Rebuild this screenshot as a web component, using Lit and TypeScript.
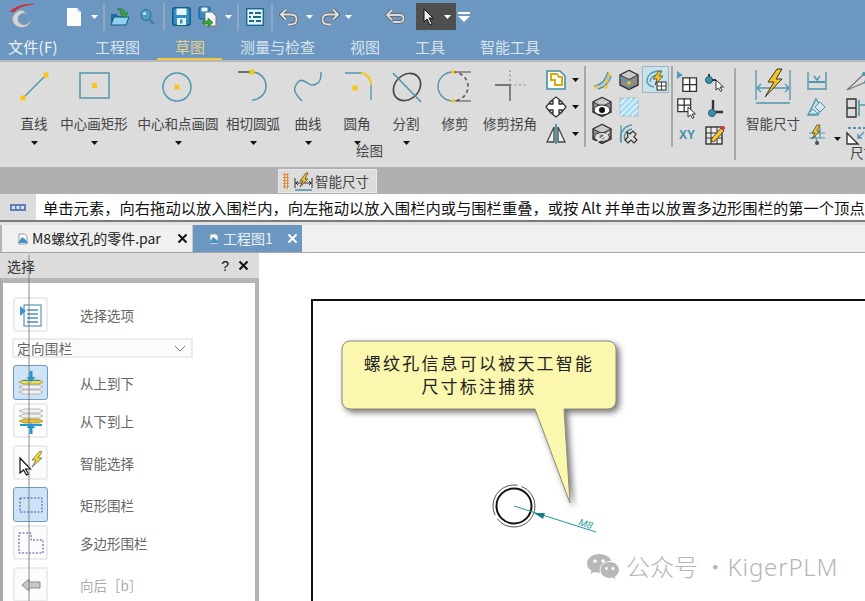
import {customElement} from "lit/decorators.js";
import {css, html, LitElement, svg, SVGTemplateResult, TemplateResult} from "lit";

const BLUE = "#4f97ad";
const YEL = "#f7c51d";
const DK = "#4a4a4a";

const caretW = html`<svg width="7" height="4" viewBox="0 0 7 4"><path d="M0 0h7L3.500 4z" fill="#fff"/></svg>`;
const caretK = html`<svg width="7" height="4" viewBox="0 0 7 4"><path d="M0 0h7L3.500 4z" fill="#111"/></svg>`;
const qsep = html`<i class="qsep"></i>`;
const cross = html`<svg width="11" height="11" viewBox="0 0 11 11"><path d="M1.500 1.500l8 8M9.500 1.500l-8 8" fill="none" stroke="currentColor" stroke-width="2"/></svg>`;

const logo = html`<svg width="30" height="27" viewBox="0 0 30 27">
  <path d="M3 9C8 3 18 0 29 1 20 2 12 4 7 9z" fill="#c8302c"/>
  <path d="M14 7C7 9 4 14 6 19c2 5 9 7 14 4 3-2 4-4 4-6-2 3-6 6-10 4-4-2-4-8 0-10 2-1 4-1 6 0-2-2-4-4-6-4z" fill="#d5d5d5" stroke="#8d9aa6" stroke-width=".8"/>
</svg>`;
const newDoc = html`<svg width="16" height="18" viewBox="0 0 16 18"><path d="M1 0h10l4 4v14H1z" fill="#fbfbfb"/><path d="M11 0v4h4z" fill="#cfd5da"/></svg>`;
const openDir = html`<svg width="20" height="20" viewBox="0 0 20 20">
  <path d="M1 7h6l1 2h8v9H1z" fill="#1f6f9c"/><path d="M1 18l3-8h15l-3 8z" fill="#8fd0ef" stroke="#12577d"/>
  <path d="M7 2c4-1 7 0 8 4h3l-4 5-4-5h2c-1-2-3-3-5-4z" fill="#3aa43a" stroke="#1d6a1d" stroke-width=".6"/>
</svg>`;
const searchI = html`<svg width="16" height="18" viewBox="0 0 16 18"><ellipse cx="7" cy="7" rx="5" ry="5.500" fill="#4f9ec4" stroke="#2a6f90"/><circle cx="5.500" cy="5.500" r="1.600" fill="#bfe4f4"/><path d="M10 11l5 5" stroke="#4a7f9c" stroke-width="2.500"/></svg>`;
const saveI = html`<svg width="19" height="19" viewBox="0 0 19 19"><rect x=".8" y=".8" width="17.400" height="17.400" rx="2" fill="#2f8fc4" stroke="#135c86" stroke-width="1.500"/><rect x="4.500" y="1.500" width="10" height="6.500" fill="#eaf5fb"/><rect x="5" y="11" width="9" height="7" fill="#e7f2f8"/><rect x="8" y="12.500" width="2.500" height="4" fill="#2f8fc4"/></svg>`;
const saveAll = html`<svg width="20" height="21" viewBox="0 0 20 21"><rect x="1" y="1" width="11" height="12" rx="1" fill="#2f8fc4" stroke="#135c86"/><rect x="3.500" y="1.500" width="6" height="4" fill="#eaf5fb"/><path d="M7 6h7l4 4v10H7z" fill="#f4f4f4" stroke="#777"/><path d="M5 15h5v-3l5 4.500-5 4.500v-3H5z" fill="#3aa43a" stroke="#1d6a1d" stroke-width=".6"/></svg>`;
const propsI = html`<svg width="18" height="18" viewBox="0 0 18 18"><rect x=".7" y=".7" width="16.600" height="16.600" fill="#e6f4fb" stroke="#16698f" stroke-width="1.400"/><path d="M3 5h4M9 5h6M3 9h2M7 9h8M3 13h5M10 13h5" stroke="#16698f" stroke-width="2"/></svg>`;
const undoI = html`<svg width="20" height="18" viewBox="0 0 20 18"><path d="M7 1.500L2 6.500l5 5M2.500 6.500h9c4 0 6 2.200 6 5s-2 5-6 5H9" fill="none" stroke="#555" stroke-width="3.400"/><path d="M7 1.500L2 6.500l5 5M2.500 6.500h9c4 0 6 2.200 6 5s-2 5-6 5H9" fill="none" stroke="#e2e2e2" stroke-width="1.800"/></svg>`;
const redoI = html`<svg width="20" height="18" viewBox="0 0 20 18"><g transform="matrix(-1 0 0 1 20 0)"><path d="M7 1.500L2 6.500l5 5M2.500 6.500h9c4 0 6 2.200 6 5s-2 5-6 5H9" fill="none" stroke="#555" stroke-width="3.400"/><path d="M7 1.500L2 6.500l5 5M2.500 6.500h9c4 0 6 2.200 6 5s-2 5-6 5H9" fill="none" stroke="#e2e2e2" stroke-width="1.800"/></g></svg>`;
const backI = html`<svg width="20" height="18" viewBox="0 0 20 18"><path d="M7 2L2 7l5 5M2.500 7h12c2.500 0 4 1.500 4 3.500s-1.500 3.500-4 3.500H8" fill="none" stroke="#666" stroke-width="3.400"/><path d="M7 2L2 7l5 5M2.500 7h12c2.500 0 4 1.500 4 3.500s-1.500 3.500-4 3.500H8" fill="none" stroke="#d8d8d8" stroke-width="1.800"/></svg>`;
const arrowI = html`<svg width="14" height="18" viewBox="0 0 14 18"><path d="M2 1v13l3-3 3 6 2-1-3-6h4z" fill="#eee" stroke="#111"/></svg>`;
const menuI = html`<svg width="12" height="10" viewBox="0 0 12 10"><path d="M0 0h12v2H0zM0 4h12L6 10z" fill="#fff"/></svg>`;

const qatSlots: [number, TemplateResult | null][] = [
  [43, logo], [17, null], [28, newDoc], [12, caretW], [8, qsep], [24, openDir], [30, searchI], [4, qsep],
  [30, saveI], [24, saveAll], [16, caretW], [4, qsep], [30, propsI], [4, qsep], [30, undoI], [10, caretW], [2, null],
  [28, redoI], [8, caretW], [28, null], [30, backI], [6, null],
];

const sq = (x: number, y: number) => svg`<rect x="${x - 2.5}" y="${y - 2.5}" width="5" height="5" fill="${YEL}"/>`;

const tools: {label: string, w: number, menu: boolean, icon: TemplateResult}[] = [
  {label: "直线", w: 48, menu: true, icon: html`<svg class="big" viewBox="0 0 40 36"><path d="M9 30L32 7" stroke="${BLUE}" stroke-width="1.500"/>${sq(9, 30)}${sq(32, 7)}</svg>`},
  {label: "中心画矩形", w: 72, menu: true, icon: html`<svg class="big" viewBox="0 0 40 36"><rect x="6" y="5" width="29" height="25" fill="none" stroke="${BLUE}" stroke-width="1.500"/>${sq(20.5, 17.5)}</svg>`},
  {label: "中心和点画圆", w: 96, menu: true, icon: html`<svg class="big" viewBox="0 0 40 36"><circle cx="19" cy="19" r="14" fill="none" stroke="${BLUE}" stroke-width="1.500"/>${sq(19, 19)}</svg>`},
  {label: "相切圆弧", w: 54, menu: true, icon: html`<svg class="big" viewBox="0 0 40 36"><path d="M5 4H19" stroke="${DK}" stroke-width="1.500"/><path d="M19 4A14 14 0 0 1 19 32" fill="none" stroke="${BLUE}" stroke-width="1.500"/>${sq(19, 4)}</svg>`},
  {label: "曲线", w: 56, menu: true, icon: html`<svg class="big" viewBox="0 0 40 36"><path d="M14 33C9 28 5 23 7 19 9 14 12 11 16 13 20 15 23 19 28 16 33 14 33 9 33 4" fill="none" stroke="${BLUE}" stroke-width="1.500"/></svg>`},
  {label: "圆角", w: 42, menu: true, icon: html`<svg class="big" viewBox="0 0 40 36"><path d="M8 5H24M34 17V32" fill="none" stroke="${BLUE}" stroke-width="1.300"/><path d="M24 5A10 12 0 0 1 34 17" fill="none" stroke="${YEL}" stroke-width="2"/>${sq(18, 20)}</svg>`},
  {label: "分割", w: 56, menu: true, icon: html`<svg class="big" viewBox="0 0 40 36"><ellipse cx="21" cy="19" rx="15" ry="12" transform="rotate(-45 21 19)" fill="none" stroke="${DK}" stroke-width="1.700"/><path d="M7 5L35 34" stroke="${BLUE}" stroke-width="1.600"/></svg>`},
  {label: "修剪", w: 42, menu: false, icon: html`<svg class="big" viewBox="0 0 40 36"><path d="M18 4A15 14.500 0 0 0 18 33" fill="none" stroke="${BLUE}" stroke-width="1.400"/><path d="M18 4A15 14.500 0 0 1 18 33" fill="none" stroke="#666" stroke-width="1.800" stroke-dasharray="3.500 3"/><path d="M18 4H36M18 33H36" stroke="${DK}" stroke-width="1.200"/><circle cx="18" cy="4" r="2" fill="${YEL}"/><circle cx="18" cy="33" r="2" fill="${YEL}"/></svg>`},
  {label: "修剪拐角", w: 68, menu: false, icon: html`<svg class="big" viewBox="0 0 40 36"><path d="M5 17H20V33" fill="none" stroke="#777" stroke-width="1.800"/><path d="M20 2V17M20 17H36" stroke="#888" stroke-width="1.200" stroke-dasharray="2 2.500"/></svg>`},
];

const ico = (body: SVGTemplateResult) => html`<svg class="sm" viewBox="0 0 22 22">${body}</svg>`;

const cube = (inner: SVGTemplateResult) => ico(svg`<path d="M11 1.500L20 6v10l-9 4.500L2 16V6z" fill="#8b8b8b" stroke="#333" stroke-width="1.400"/><path d="M2 6l9 4.500L20 6 11 1.500z" fill="#c9c9c9" stroke="#333"/>${inner}`);

const col1 = [
  ico(svg`<path d="M2 2h13l5 5v13H2z" fill="#fff" stroke="#3f8fa8" stroke-width="1.600"/><path d="M6 5h6l2 3h3v8H10v-5H6z" fill="#fff" stroke="#d9a90e" stroke-width="2"/>`),
  ico(svg`<path d="M8 8V5H6l5-4 5 4h-2v3h3V6l4 5-4 5v-2h-3v3h2l-5 4-5-4h2v-3H5v2l-4-5 4-5v2z" fill="#fff" stroke="#333" stroke-width="1.300"/>`),
  ico(svg`<path d="M9 4v15H2zM13 4v15h7z" fill="#eee" stroke="#444" stroke-width="1.300"/><path d="M11 1v20" stroke="${BLUE}" stroke-width="2"/>`),
];

const cluster2: TemplateResult[] = [
  ico(svg`<path d="M3 17C10 16 15 11 17 3M7 20C14 18 18 14 20 7" fill="none" stroke="${BLUE}" stroke-width="1.500"/><path d="M3 18l7-2 6-4 2-7" fill="none" stroke="#a8a8a8"/><circle cx="5" cy="18" r="1.800" fill="${YEL}"/><circle cx="15" cy="18" r="1.800" fill="${YEL}"/><circle cx="18" cy="6" r="1.800" fill="${YEL}"/><circle cx="16" cy="12" r="1.800" fill="${YEL}"/>`),
  cube(svg`<path d="M2 9l9 4.500V20" fill="none" stroke="${BLUE}" stroke-width="1.800"/><circle cx="11" cy="14" r="1.800" fill="${YEL}"/>`),
  ico(svg`<path d="M2 12C2 6 7 2 15 2M5 13c0-4 3-7 9-7M9 18C4 17 2 15 2 12" fill="none" stroke="${BLUE}" stroke-width="1.300"/><path d="M14 2l-6 8h4l-2 6 8-9h-4l3-5z" fill="${YEL}" stroke="#333" stroke-width=".7"/><rect x="12" y="13" width="9" height="8" fill="#fff" stroke="#444" stroke-width="1.200"/><path d="M16.500 13v8M12 17h9" stroke="#444"/>`),
  cube(svg`<ellipse cx="11" cy="14" rx="8" ry="5" fill="#fff" stroke="#222"/><circle cx="11" cy="14" r="3" fill="#111"/>`),
  html`<svg class="sm" viewBox="0 0 22 22"><rect x="2" y="2" width="18" height="18" fill="#a9dcf4" stroke="#a7bcc6"/><path d="M2 8l6-6M2 14L14 2M2 20L20 2M8 20L20 8M14 20l6-6" stroke="#e3f4fc" stroke-width="1.500"/></svg>`,
  html`<span></span>`,
  cube(svg`<ellipse cx="11" cy="14" rx="7.500" ry="4.500" fill="#ddd" stroke="#333"/><circle cx="11" cy="14" r="2.500" fill="#777"/><path d="M5 20L18 9" stroke="#eee" stroke-width="1.500"/>`),
  ico(svg`<path d="M3 19C1 10 6 3 14 2M7 17c-2-5 1-10 7-11" fill="none" stroke="${BLUE}" stroke-width="1.400"/><path d="M3 2v18" stroke="${BLUE}" stroke-width="1.200"/><path d="M9 9l3 2 3-3 3 3-2 3 3 3-3 3-3-3-3 3-3-3 3-3z" fill="#ddd" stroke="#333" stroke-width="1.200"/>`),
  html`<span></span>`,
];

const grid = svg`<path d="M1 1h16v16H1z" fill="#fff" stroke="#333" stroke-width="1.600"/><path d="M9 1v16M1 9h16" stroke="#333" stroke-width="1.600"/>`;
const cursor = svg`<path d="M12 10v10l2.500-2 2 3.500 1.500-1-2-3.500h3.500z" fill="#fff" stroke="#333"/>`;
const cluster3 = [
  ico(svg`<path d="M1 1l6 4-6 4z" fill="#4f9ec4"/><g transform="translate(6 7) scale(.85)">${grid}</g>`),
  ico(svg`<path d="M5 4v6" stroke="#333" stroke-width="2"/><circle cx="5" cy="10" r="3.500" fill="#3f8fa8" stroke="#1f5f78"/><path d="M8 10h4" stroke="#333" stroke-width="2"/>${cursor}`),
  ico(svg`<g transform="translate(1 1) scale(.8)">${grid}</g>${cursor}`),
  ico(svg`<path d="M9 3v12h10" fill="none" stroke="#333" stroke-width="2.400"/><circle cx="8" cy="16" r="3.500" fill="#3f8fa8" stroke="#1f5f78"/>`),
  html`<span class="xy">XY</span>`,
  ico(svg`<rect x="2" y="3" width="16" height="17" fill="#e9e9e9" stroke="#333" stroke-width="1.400"/><path d="M7 3v17M13 3v17M2 9h16M2 14h16" stroke="#333"/><path d="M7 18l1-4 9-10 3 3-9 10z" fill="#f2c230" stroke="#333" stroke-width=".8"/><circle cx="19" cy="4" r="2" fill="#d8313a"/>`),
];

const dimBig = html`<svg class="big dim" viewBox="0 0 36 36"><path d="M1 2v30M35 2v30" stroke="${BLUE}" stroke-width="1.300"/><path d="M1 35h34" stroke="${BLUE}" stroke-width="1.600"/><path d="M6 16l-4 4 4 4M30 16l4 4-4 4M2 20h32" fill="none" stroke="${BLUE}" stroke-width="1.300"/><path d="M22 1L13 14h6L10 29 27 11h-6l6-10z" fill="${YEL}" stroke="#333"/></svg>`;

const cluster4 = [
  ico(svg`<path d="M2 2v18M20 2v18M2 19h18" stroke="${BLUE}" stroke-width="1.400"/><path d="M3 12h16" stroke="${BLUE}" stroke-width="2"/><path d="M8 6l3 4 3-4" fill="none" stroke="${BLUE}" stroke-width="1.400"/>`),
  ico(svg`<path d="M2 18L10 2l5 8-3 8z" fill="none" stroke="${BLUE}" stroke-width="1.400"/><path d="M14 5l5 5-5 5-5-5zM7 12l5 5H2z" fill="#d5e6ee" stroke="${BLUE}"/>`),
  ico(svg`<path d="M3 9h16M3 14h16M8 9l4 11M14 3v11" fill="none" stroke="${BLUE}" stroke-width="1.200"/><path d="M11 1L6 9h3l-3 6 8-8h-3l3-6z" fill="${YEL}" stroke="#333" stroke-width=".7"/><circle cx="11" cy="19" r="2" fill="${DK}"/>`),
];
const cluster5 = [
  ico(svg`<path d="M1 20L18 4M1 20L20 12" stroke="#777" stroke-width="1.200"/><circle cx="18" cy="4" r="2" fill="${BLUE}"/><circle cx="20" cy="12" r="2" fill="${BLUE}"/>`),
  ico(svg`<path d="M1 2h9v18H1zM1 11h9" fill="none" stroke="#333" stroke-width="1.400"/><path d="M13 3v16M13 8h8" stroke="${BLUE}" stroke-width="1.600"/>`),
  ico(svg`<path d="M1 20V9l11 11z" fill="#fff" stroke="#333" stroke-width="1.400"/><path d="M2 4h18" stroke="${BLUE}" stroke-dasharray="3 2" stroke-width="2"/><path d="M18 8l-6 6M12 10v4h4" fill="none" stroke="${BLUE}" stroke-width="1.400"/>`),
];

const chipIcon = html`<svg width="19" height="19" viewBox="0 0 19 19"><path d="M1 6v10M18 6v10" stroke="#333"/><path d="M1 18h17" stroke="${BLUE}" stroke-width="1.600"/><path d="M1 11h17M4 9l-2 2 2 2M15 9l2 2-2 2" fill="none" stroke="#333"/><path d="M12 1L6 9h3l-3 6 8-8h-3l3-6z" fill="${YEL}" stroke="#333" stroke-width=".7"/></svg>`;
const rulerI = html`<svg width="16" height="7" viewBox="0 0 16 7"><rect width="16" height="7" fill="#5f7fb8"/><path d="M2 2h3v3H2zM6.500 2h3v3h-3zM11 2h3v3h-3z" fill="#d9e2f2"/></svg>`;
const tabDoc = html`<svg width="12" height="12" viewBox="0 0 12 12"><path d="M2 1h6l2 2v8H2z" fill="#fff" stroke="#99a"/><path d="M1 10l4-6 4 3 2 3z" fill="#3d95c8"/></svg>`;

const layer = (y: number, fill: string, line: string) => svg`<path d="M1 ${y}l5-2h15l4 2-4 2H6z" fill="${fill}" stroke="${line}" stroke-width=".8"/>`;

const btn = {
  opts: html`<svg width="24" height="24" viewBox="0 0 24 24"><rect x="5" y="2" width="17" height="21" fill="#fff" stroke="#3f7fb0"/><path d="M8 7h11M8 11h11M8 15h11M8 19h11" stroke="#4f8fc0" stroke-width="1.600"/><path d="M1 3l6 5-6 5z" fill="#3d95c8"/></svg>`,
  down: html`<svg width="26" height="26" viewBox="0 0 26 26">${layer(22, "#f2f2f2", "#aaa")}${layer(17, "#f2f2f2", "#aaa")}${layer(12, "#f6dc52", "#a8932c")}<path d="M11.500 1h3v6h3l-4.500 5-4.500-5h3z" fill="#1d9ad6"/><path d="M4 10.500h18" stroke="#1d9ad6"/></svg>`,
  up: html`<svg width="26" height="26" viewBox="0 0 26 26">${layer(3, "#f2f2f2", "#aaa")}${layer(8, "#f2f2f2", "#aaa")}${layer(13, "#e7bd3a", "#a8932c")}<path d="M2 17h22" stroke="#1d9ad6" stroke-width="2"/><path d="M13 15l4.500 5h-3v6h-3v-6h-3z" fill="#1d9ad6"/></svg>`,
  smart: html`<svg width="26" height="26" viewBox="0 0 26 26"><path d="M2 8v15l3.500-3 3 5 2-1-3-5h5z" fill="#fff" stroke="#111" stroke-width="1.200"/><path d="M22 1l-8 9h4l-4 7 10-9h-4l4-6z" fill="#f5e020" stroke="#555" stroke-width=".7"/></svg>`,
  rect: html`<svg width="24" height="16" viewBox="0 0 24 16"><rect x="1" y="1" width="22" height="14" fill="none" stroke="#4a4ab0" stroke-dasharray="2 1.500"/></svg>`,
  poly: html`<svg width="26" height="22" viewBox="0 0 26 22"><path d="M1 1h12v7h12v13H1z" fill="none" stroke="#4a4ab0" stroke-dasharray="2 1.500"/></svg>`,
  back: html`<svg width="20" height="14" viewBox="0 0 20 14"><path d="M1 7l7-6v3h11v6H8v3z" fill="#c8c8c8" stroke="#888"/></svg>`,
};

const rows: {label: string, icon: TemplateResult, on?: boolean, off?: boolean, wide: boolean}[] = [
  {label: "从上到下", icon: btn.down, on: true, wide: true},
  {label: "从下到上", icon: btn.up, wide: false},
  {label: "智能选择", icon: btn.smart, wide: true},
  {label: "矩形围栏", icon: btn.rect, on: true, wide: true},
  {label: "多边形围栏", icon: btn.poly, wide: false},
  {label: "向后［b］", icon: btn.back, off: true, wide: true},
];

@customElement("app-root")
export class AppRoot extends LitElement {

  //language=css
  static styles = css`
    * {
      box-sizing: border-box;
    }

    :host {
      display: flex;
      flex-direction: column;
      width: 865px;
      height: 601px;
      overflow: hidden;
      background: #fff;
      font-family: "Noto Sans CJK SC", "Liberation Sans", sans-serif;
      color: #444;
    }

    .qat {
      display: flex;
      align-items: center;
      height: 33px;
      flex: none;
      background: #6c97c0;
    }

    .slot {
      display: flex;
      align-items: center;
      justify-content: center;
      flex: none;
      height: 100%;
    }

    .qsep {
      display: block;
      width: 2px;
      height: 28px;
      background: #8fa9c2;
    }

    .pick {
      display: flex;
      align-items: center;
      gap: 8px;
      width: 40px;
      height: 27px;
      padding-left: 6px;
      background: #4f4f4f;
    }

    .menu {
      display: flex;
      justify-content: center;
      width: 16px;
    }

    .tabs {
      display: flex;
      align-items: center;
      gap: 35px;
      height: 27px;
      flex: none;
      padding: 0 0 0 8px;
      background: #6c97c0;
      color: #d9e4ee;
      font-size: 15px;
      line-height: 27px;
    }

    .tabs .file {
      width: 52px;
      letter-spacing: .3px;
      color: #eef3f8;
    }

    .tabs span {
      position: relative;
    }

    .tabs .active {
      color: #e7cf8e;
    }

    .tabs .active::after {
      content: "";
      position: absolute;
      left: -18px;
      right: -17px;
      bottom: 0;
      height: 2px;
      background: #f5c63c;
    }

    .ribbon {
      display: flex;
      height: 107px;
      flex: none;
      padding: 0 0 0 10px;
      background: #dcdcdc;
      border-top: 2px solid #b9b9b9;
      overflow: hidden;
      font-size: 13.500px;
    }

    .draw {
      display: flex;
      flex-direction: column;
      flex: none;
      width: 534px;
    }

    .tools {
      display: flex;
    }

    .tool {
      display: flex;
      flex-direction: column;
      align-items: center;
      flex: none;
      padding-top: 6px;
    }

    .big {
      display: block;
      width: 40px;
      height: 36px;
    }

    .big.dim {
      width: 36px;
    }

    .tool .label {
      margin-top: 9px;
      height: 20px;
      line-height: 20px;
      white-space: nowrap;
    }

    .tool .more {
      display: flex;
      align-items: center;
      justify-content: center;
      height: 20px;
    }

    .group-name {
      margin: -12px 0 0 346px;
      line-height: 18px;
    }

    .col {
      display: grid;
      grid-template-columns: 24px 14px;
      grid-auto-rows: 27px;
      align-items: center;
      justify-items: center;
      flex: none;
      width: 40px;
      padding-top: 4px;
    }

    .sep {
      flex: none;
      width: 2px;
      height: 81px;
      margin-top: 4px;
      background: #a8a8a8;
    }

    .sep.long {
      height: 92px;
      margin-top: 6px;
    }

    .cells {
      display: grid;
      grid-auto-rows: 27px;
      align-items: center;
      justify-items: center;
      flex: none;
      padding-top: 4px;
    }

    .cells.three {
      grid-template-columns: repeat(3, 27px);
      margin: 0 2px;
    }

    .cells.two {
      grid-template-columns: repeat(2, 28px);
      margin: 0 5px 0 0;
      padding-top: 5px;
    }

    .cell {
      display: flex;
      align-items: center;
      justify-content: center;
      width: 27px;
      height: 27px;
    }

    .cell.lit {
      background: #c6e2ee;
      border: 1px solid #a4b4bc;
    }

    .sm {
      display: block;
      width: 22px;
      height: 22px;
    }

    .xy {
      font: bold 12px "Liberation Sans", sans-serif;
      color: #3f8fa8;
    }

    .dim-tool {
      width: 72px;
      margin-left: 1px;
    }

    .tail {
      display: flex;
      flex-direction: column;
      flex: none;
      padding-top: 5px;
      margin-left: -4px;
    }

    .tail-row {
      display: grid;
      grid-template-columns: 24px 16px 24px;
      grid-auto-rows: 27px;
      align-items: center;
      justify-items: center;
    }

    .tail-name {
      margin: -5px 0 0 45px;
      line-height: 18px;
      white-space: nowrap;
    }

    .strip {
      display: flex;
      align-items: flex-start;
      height: 27px;
      flex: none;
      padding: 2px 0 0 278px;
      background: #b0b0b0;
    }

    .chip {
      display: flex;
      align-items: center;
      width: 99px;
      height: 24px;
      padding-left: 4px;
      gap: 2px;
      background: #dcdcdc;
      border: 1px solid #e8e8e8;
      font-size: 13.500px;
      white-space: nowrap;
    }

    .grip {
      width: 6px;
      height: 16px;
      margin-right: 3px;
      background-image: radial-gradient(#e8893a 1.100px, transparent 1.200px);
      background-size: 3px 3px;
    }

    .prompt {
      display: flex;
      height: 26px;
      flex: none;
      font-size: 15.300px;
      line-height: 26px;
      color: #111;
    }

    .prompt .key {
      display: flex;
      align-items: center;
      justify-content: center;
      flex: none;
      width: 36px;
      margin-right: 7px;
      background: #dcdcdc;
    }

    .prompt .msg {
      flex: 1;
      overflow: hidden;
      white-space: nowrap;
    }

    .rule {
      height: 5px;
      flex: none;
      border-top: 2px solid #7a7a7a;
      background: #e4e4e4;
    }

    .docs {
      display: flex;
      height: 28px;
      flex: none;
      padding-left: 4px;
      background: #f0f0f0;
      border-bottom: 1px solid #a5a5a5;
      border-left: 2px solid #b5b5b5;
      font-size: 14px;
      line-height: 27px;
      color: #222;
    }

    .doc {
      display: flex;
      align-items: center;
      flex: none;
      white-space: nowrap;
    }

    .doc.one {
      width: 187px;
      padding-left: 11px;
      gap: 3px;
      border-right: 1px solid #c8c8c8;
    }

    .doc.two {
      width: 109px;
      padding-left: 15px;
      gap: 3px;
      background: #6c97c0;
      color: #eaf0f6;
    }

    .doc .x {
      display: flex;
      margin-left: auto;
      margin-right: 4px;
    }

    .doc.one .x {
      color: #111;
    }

    .doc.two .x {
      color: #fff;
    }

    .main {
      display: flex;
      flex: 1;
      min-height: 0;
      position: relative;
    }

    .panel {
      display: flex;
      flex-direction: column;
      flex: none;
      width: 259px;
      background: #dcdcdc;
    }

    .head {
      display: flex;
      align-items: center;
      gap: 9px;
      height: 25px;
      flex: none;
      padding: 0 10px 0 7px;
      font-size: 14px;
      color: #333;
    }

    .head .title {
      flex: 1;
    }

    .head b {
      display: flex;
      font: 14px "Liberation Sans", sans-serif;
      color: #111;
    }

    .body {
      flex: 1;
      min-height: 0;
      padding: 14px 0 0 10px;
      background: #fff;
      border: 3px solid #b5b5b5;
      border-bottom: 0;
      border-right-width: 4px;
      border-top-width: 5px;
      border-left-color: #a9a9a9;
    }

    .row {
      display: flex;
      align-items: center;
      gap: 32px;
      margin-top: 3px;
      font-size: 13.500px;
      color: #666;
      white-space: nowrap;
    }

    .row.wide {
      margin-top: 7px;
    }

    .row.first {
      margin-top: 0;
    }

    .row.off {
      color: #aaa;
    }

    .btn {
      display: flex;
      align-items: center;
      justify-content: center;
      flex: none;
      width: 35px;
      height: 35px;
      background: #fcfcfc;
      border: 2px solid #ececec;
      border-radius: 3px;
    }

    .btn.on {
      background: #cfe3f7;
      border: 1px solid #6b9dc9;
    }

    .select {
      display: flex;
      align-items: center;
      justify-content: space-between;
      width: 181px;
      height: 20px;
      margin: 6px 0 0 -1px;
      padding: 0 5px 0 3px;
      background: #fbfbfb;
      border: 2px solid #ececec;
      font-size: 13.500px;
      letter-spacing: .4px;
      color: #666;
    }

    .select + .row {
      margin-top: 7px;
    }

    .canvas {
      flex: 1;
      min-width: 0;
      padding: 46px 0 0 52px;
      position: relative;
      overflow: hidden;
      background: #fff;
    }

    .sheet {
      height: 400px;
      border: 2px solid #111;
      border-right: 0;
      border-bottom: 0;
    }

    .drawing {
      position: absolute;
      left: -1px;
      top: 0;
      width: 607px;
      height: 348px;
    }

    .balloon {
      filter: drop-shadow(3px 3px 3px rgba(0, 0, 0, .55));
    }

    .note {
      font-size: 17px;
      letter-spacing: 2.200px;
      fill: #222;
      text-anchor: middle;
    }

    .m8 {
      font: italic 10px "Liberation Sans", sans-serif;
      fill: #1f9a9a;
    }

    .mark {
      display: flex;
      align-items: center;
      gap: 7px;
      position: absolute;
      left: 328px;
      top: 298px;
      color: #b5b5b5;
      font-size: 24px;
      font-weight: 300;
      line-height: 30px;
      white-space: nowrap;
    }

    .plm {
      margin-left: -5px;
      font-family: "Noto Sans", sans-serif;
      font-weight: 300;
      font-size: 24px;
      letter-spacing: .8px;
    }

    .stripe {
      position: absolute;
      left: 28px;
      top: 2px;
      bottom: 0;
      width: 2px;
      background: rgba(110, 110, 110, .4);
    }
  `;

  render() {
    return html`
      <div class="qat">
        ${qatSlots.map(([w, c]) => html`<span class="slot" style="width:${w}px">${c}</span>`)}
        <div class="pick">${arrowI}${caretW}</div>
        <div class="menu">${menuI}</div>
      </div>
      <div class="tabs">
        <span class="file">文件(F)</span>
        <span>工程图</span>
        <span class="active">草图</span>
        <span>测量与检查</span>
        <span>视图</span>
        <span>工具</span>
        <span>智能工具</span>
      </div>
      <div class="ribbon">
        <div class="draw">
          <div class="tools">
            ${tools.map(t => html`
              <div class="tool" style="width:${t.w}px">
                ${t.icon}
                <div class="label">${t.label}</div>
                <div class="more">${t.menu ? caretK : ""}</div>
              </div>
            `)}
          </div>
          <div class="group-name">绘图</div>
        </div>
        <div class="col">
          ${col1.map(i => html`${i}${caretK}`)}
        </div>
        <div class="sep"></div>
        <div class="cells three">
          ${cluster2.map((c, i) => html`<div class="cell ${i == 2 ? 'lit' : ''}">${c}</div>`)}
        </div>
        <div class="sep"></div>
        <div class="cells two">
          ${cluster3.map(c => html`<div class="cell">${c}</div>`)}
        </div>
        <div class="sep long"></div>
        <div class="tool dim-tool">
          ${dimBig}
          <div class="label">智能尺寸</div>
        </div>
        <div class="tail">
          <div class="tail-row">
            ${cluster4.map((c, i) => html`
              ${c}
              <span>${i == 2 ? caretK : ""}</span>
              ${cluster5[i]}
            `)}
          </div>
          <div class="tail-name">尺寸</div>
        </div>
      </div>
      <div class="strip">
        <div class="chip"><i class="grip"></i>${chipIcon}智能尺寸</div>
      </div>
      <div class="prompt">
        <div class="key">${rulerI}</div>
        <div class="msg">单击元素，向右拖动以放入围栏内，向左拖动以放入围栏内或与围栏重叠，或按 Alt 并单击以放置多边形围栏的第一个顶点</div>
      </div>
      <div class="rule"></div>
      <div class="docs">
        <div class="doc one">${tabDoc}<span>M8螺纹孔的零件.par</span><span class="x">${cross}</span></div>
        <div class="doc two">${tabDoc}<span>工程图1</span><span class="x">${cross}</span></div>
      </div>
      <div class="main">
        <div class="panel">
          <div class="head">
            <span class="title">选择</span>
            <b>?</b>
            <b>${cross}</b>
          </div>
          <div class="body">
            <div class="row first"><div class="btn">${btn.opts}</div>选择选项</div>
            <div class="select">定向围栏
              <svg width="12" height="7" viewBox="0 0 12 7"><path d="M1 1l5 5 5-5" fill="none" stroke="#777"/></svg>
            </div>
            ${rows.map(r => html`
              <div class="row ${r.wide ? 'wide' : ''} ${r.off ? 'off' : ''}">
                <div class="btn ${r.on ? 'on' : ''}">${r.icon}</div>${r.label}
              </div>
            `)}
          </div>
        </div>
        <div class="stripe"></div>
        <div class="canvas">
          <div class="sheet"></div>
          <svg class="drawing" viewBox="258 253 607 348">
            <path class="balloon" d="M350 341H608a8 8 0 0 1 8 8V401a8 8 0 0 1-8 8H564L570 503 535 409H350a8 8 0 0 1-8-8V349a8 8 0 0 1 8-8Z" fill="#fbf7ae" stroke="#8c8c7c"/>
            <text class="note" x="479" y="370">螺纹孔信息可以被天工智能</text>
            <text class="note" x="479" y="393">尺寸标注捕获</text>
            <circle cx="514" cy="506" r="21" fill="none" stroke="#555" stroke-dasharray="52 4 46 4 26 0"/>
            <circle cx="514" cy="506" r="17.500" fill="none" stroke="#111" stroke-width="2"/>
            <path d="M514 506L596 532" stroke="#1f9a9a"/>
            <path d="M534 513L545 513L543 519z" fill="#157f7f"/>
            <text class="m8" transform="translate(578 525) rotate(18)">M8</text>
          </svg>
          <div class="mark">
            <svg width="32" height="27" viewBox="0 0 32 27">
              <path d="M12 1C5.500 1 0 5.200 0 10.500c0 3 1.800 5.600 4.500 7.300L3.500 21l3.800-1.900c1.500.4 3 .6 4.700.6.500 0 .8 0 1.200 0-.3-1-.5-1.800-.5-2.800 0-5 4.700-9 10.700-9 .4 0 .8 0 1.100.1C23.300 4 18 1 12 1z" fill="#b8b8b8"/>
              <path d="M32 17c0-4.500-4.200-8-9.200-8s-9.300 3.500-9.300 8 4.300 8 9.300 8c1 0 2.100-.2 3-.5l2.900 1.800-.8-2.900c2.500-1.500 4.100-3.800 4.100-6.400z" fill="#b8b8b8"/>
              <circle cx="8" cy="8" r="1.700" fill="#fff"/><circle cx="16" cy="8" r="1.700" fill="#fff"/>
              <circle cx="19.500" cy="15.500" r="1.400" fill="#fff"/><circle cx="26" cy="15.500" r="1.400" fill="#fff"/>
            </svg>
            <span>公众号 · <span class="plm">KigerPLM</span></span>
          </div>
        </div>
      </div>
    `;
  }
}
